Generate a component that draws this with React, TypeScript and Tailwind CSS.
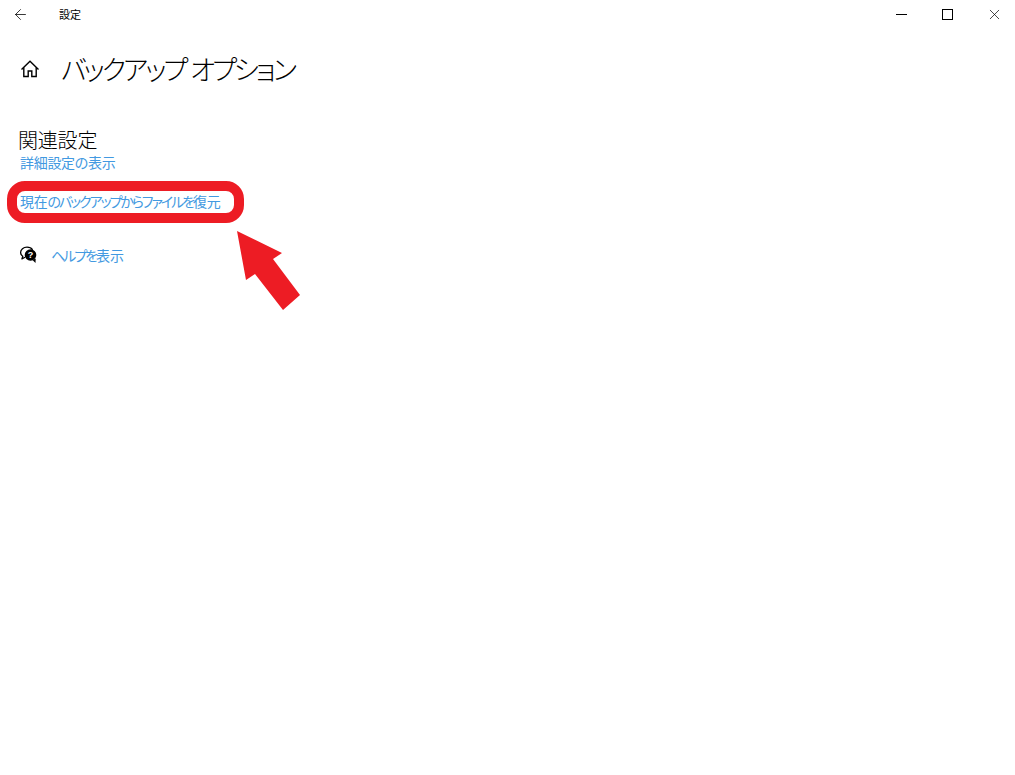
import React from "react";
import { ArrowLeft, X } from "lucide-react";

const HelpIcon: React.FC = () => (
  <svg width="20" height="18" viewBox="0 0 20 18" fill="none">
    <path
      d="M8 1.2c-3.600 0-6.400 2.300-6.400 5.200 0 1.600.9 3 2.200 3.900l-.9 2.600 3.200-1.700"
      stroke="#000"
      strokeWidth="1.300"
      strokeLinejoin="round"
    />
    <path d="M8 1.2c2.400 0 4.500 1 5.600 2.600" stroke="#000" strokeWidth="1.300" />
    <circle cx="11.500" cy="9" r="5.800" fill="#000" />
    <path d="M13.500 14l3 3 .2-4.500z" fill="#000" />
    <text
      x="11.500"
      y="12"
      textAnchor="middle"
      fontSize="9"
      fontWeight="700"
      fontFamily="'Liberation Sans', sans-serif"
      fill="#fff"
    >
      ?
    </text>
  </svg>
);

const HomeIcon: React.FC = () => (
  <svg width="20" height="20" viewBox="0 0 20 20" fill="none" stroke="#000" strokeWidth="1.400">
    <path d="M1.500 10.500 10 2.200l8.500 8.300" />
    <path d="M3.800 8.500v9h4.400v-5.500h3.600v5.500h4.400v-9" />
  </svg>
);

const linkClass = "text-[14px] leading-[20px] text-[#4299e1] [font-feature-settings:'palt']";

export default function App() {
  return (
    <div className="relative w-[1015px] h-[775px] bg-white overflow-hidden font-['Noto_Sans_CJK_JP',sans-serif] text-black">
      <div className="flex items-center h-[29px]">
        <ArrowLeft size={17} strokeWidth={1.1} className="ml-[12px]" />
        <span className="ml-[30px] text-[11px]">設定</span>
        <div className="ml-auto flex items-center">
          <div className="w-[11px] h-px bg-black mr-[35px]" />
          <div className="w-[11px] h-[11px] border border-black mr-[33px]" />
          <X size={17} strokeWidth={1} className="mr-[12px]" />
        </div>
      </div>

      <div className="flex items-center mt-[21px] ml-[20px] h-[38px]">
        <HomeIcon />
        <h1 className="ml-[21px] text-[27px] font-light tracking-[-3px] whitespace-nowrap [font-feature-settings:'palt'] [word-spacing:2px]">
          バックアップ オプション
        </h1>
      </div>

      <div className="mt-[40px] ml-[19px] flex flex-col items-start">
        <h2 className="text-[20px] leading-[24px] font-light tracking-[-0.2px] -ml-[1px]">関連設定</h2>
        <a className={`${linkClass} ml-[1px] mt-0 tracking-[-0.3px]`}>詳細設定の表示</a>
        <a className={`${linkClass} -ml-[12px] mt-[9px] w-[237px] h-[42px] flex items-center pl-[3px] pb-[2px] border-[10px] border-[#ed1c24] rounded-[18px] whitespace-nowrap tracking-[-0.3px]`}>
          現在<span className="tracking-[-2.05px]">のバックアップからファイルを</span>復元
        </a>
        <div className="flex items-center mt-[22px]">
          <HelpIcon />
          <a className={`${linkClass} ml-[12px] tracking-[-0.2px]`}>
            <span className="tracking-[-2px]">ヘルプを</span>表示
          </a>
        </div>
      </div>

      <svg className="absolute left-[230px] top-[225px]" width="80" height="90" viewBox="230 225 80 90">
        <polygon points="237,231 282,253 273,259 300,295 283,310 255,274 246,280" fill="#ed1c24" />
      </svg>
    </div>
  );
}
